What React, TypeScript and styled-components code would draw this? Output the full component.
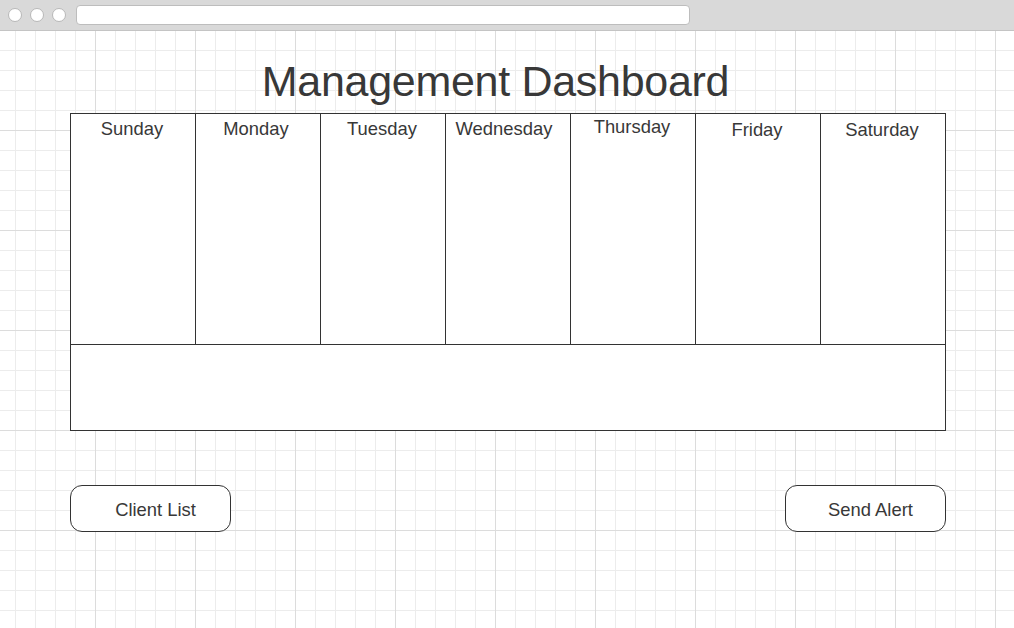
import styled, { createGlobalStyle } from "styled-components";

const GlobalStyle = createGlobalStyle`
	html, body {
		margin: 0;
		padding: 0;
		background: #ffffff;
	}
	body {
		font-family: "Liberation Sans", Arial, sans-serif;
		color: #383838;
	}
`;

const days = [
	{ name: "Sunday", dx: -1, dy: 0 },
	{ name: "Monday", dx: -2, dy: 0 },
	{ name: "Tuesday", dx: -1, dy: 0 },
	{ name: "Wednesday", dx: -4, dy: 0 },
	{ name: "Thursday", dx: -1, dy: -2 },
	{ name: "Friday", dx: -1, dy: 1 },
	{ name: "Saturday", dx: -1, dy: 1 },
];

function App() {
	return (
		<Page>
			<GlobalStyle />
			<TopBar>
				<Dots>
					<Dot />
					<Dot />
					<Dot />
				</Dots>
				<AddressBar />
			</TopBar>
			<Canvas>
				<Title>Management Dashboard</Title>
				<Calendar>
					<Week>
						{days.map((d) => (
							<DayCell key={d.name}>
								<DayLabel dx={d.dx} dy={d.dy}>
									{d.name}
								</DayLabel>
							</DayCell>
						))}
					</Week>
					<Notes />
				</Calendar>
				<Actions>
					<ActionButton>Client List</ActionButton>
					<ActionButton>Send Alert</ActionButton>
				</Actions>
			</Canvas>
		</Page>
	);
}

export default App;

const Page = styled.div`
	width: 1014px;
	height: 628px;
	display: flex;
	flex-direction: column;
	overflow: hidden;
`;

const TopBar = styled.div`
	height: 30px;
	flex-shrink: 0;
	display: flex;
	align-items: center;
	background-color: #d9d9d9;
	border-bottom: 1px solid #c4c4c4;
	padding-left: 8px;
	box-sizing: content-box;
`;

const Dots = styled.div`
	display: flex;
	gap: 8px;
`;

const Dot = styled.div`
	width: 12px;
	height: 12px;
	border-radius: 50%;
	background: #ffffff;
	border: 1px solid #b8b8b8;
`;

const AddressBar = styled.div`
	margin-left: 10px;
	width: 612px;
	height: 18px;
	background: #ffffff;
	border: 1px solid #bdbdbd;
	border-radius: 4px;
`;

const Canvas = styled.div`
	flex: 1;
	display: flex;
	flex-direction: column;
	padding: 25px 68px 0 70px;
	background-color: #ffffff;
	background-image: linear-gradient(to right, #dcdcdc 1px, transparent 1px),
		linear-gradient(to bottom, #dcdcdc 1px, transparent 1px),
		linear-gradient(to right, #ececec 1px, transparent 1px),
		linear-gradient(to bottom, #ececec 1px, transparent 1px);
	background-size: 100px 100%, 100% 100px, 20px 100%, 100% 20px;
	background-position: 95px 0, 0 99px, 15px 0, 0 19px;
`;

const Title = styled.h1`
	margin: 0 0 7px 0;
	font-size: 43px;
	line-height: 50px;
	letter-spacing: -0.3px;
	font-weight: normal;
	text-align: center;
	color: #383838;
	padding-right: 25px;
`;

const Calendar = styled.div`
	width: 874px;
	border: 1px solid #333333;
	background: #ffffff;
`;

const Week = styled.div`
	display: grid;
	grid-template-columns: repeat(6, 125px) 1fr;
	height: 230px;
	border-bottom: 1px solid #333333;
`;

const DayCell = styled.div`
	border-right: 1px solid #333333;
	padding-top: 5px;
	&:last-child {
		border-right: none;
	}
`;

const DayLabel = styled.div<{ dx: number; dy: number }>`
	font-size: 18.4px;
	line-height: 20px;
	text-align: center;
	color: #383838;
	transform: translate(${(p) => p.dx}px, ${(p) => p.dy}px);
`;

const Notes = styled.div`
	height: 85px;
`;

const Actions = styled.div`
	display: flex;
	justify-content: space-between;
	width: 876px;
	margin-top: 54px;
`;

const ActionButton = styled.button`
	width: 161px;
	height: 47px;
	box-sizing: border-box;
	padding: 2px 0 0 10px;
	background: #ffffff;
	border: 1px solid #333333;
	border-radius: 12px;
	font-family: "Liberation Sans", Arial, sans-serif;
	font-size: 18.4px;
	color: #383838;
	text-align: center;
	cursor: pointer;
`;
